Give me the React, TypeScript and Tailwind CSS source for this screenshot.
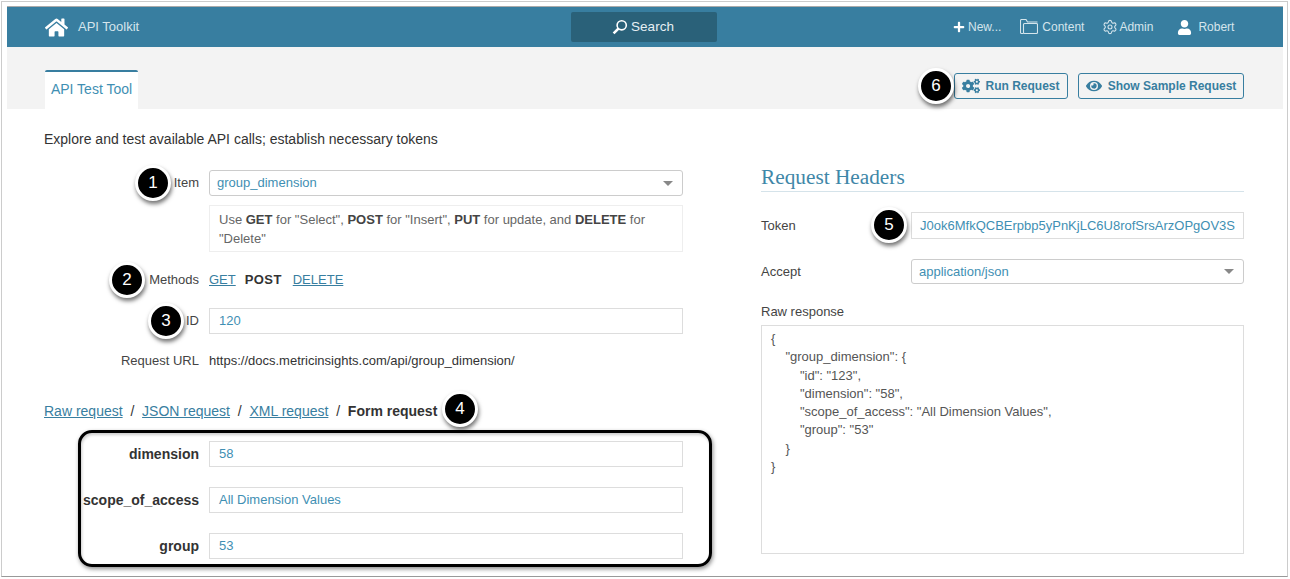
import React from 'react';
import { FaHome, FaPlus, FaCogs, FaEye, FaUser } from 'react-icons/fa';
import { Settings } from 'lucide-react';

const Badge: React.FC<{ n: number; className: string }> = ({ n, className }) => (
  <div className={`absolute w-[30px] h-[30px] rounded-full bg-black border-[3px] border-white text-white text-[17px] flex items-center justify-center shadow-[1px_3px_4px_rgba(0,0,0,0.55)] box-content ${className}`}>
    {n}
  </div>
);

const Field: React.FC<{ value: string; className?: string }> = ({ value, className = '' }) => (
  <div className={`border border-[#ddd] bg-white text-[13px] text-[#3f8fb3] flex items-center px-[9px] ${className}`}>{value}</div>
);

const Select: React.FC<{ value: string; className?: string }> = ({ value, className = '' }) => (
  <div className={`border border-[#ccc] rounded-[3px] bg-white text-[13px] text-[#3f8fb3] flex items-center justify-between pl-[7px] pr-[9px] ${className}`}>
    <span>{value}</span>
    <span className="w-0 h-0 border-l-[5px] border-r-[5px] border-t-[5px] border-l-transparent border-r-transparent border-t-[#888]"></span>
  </div>
);

const Row: React.FC<{ label: string; bold?: boolean; className?: string; children: React.ReactNode }> = ({ label, bold, className = '', children }) => (
  <div className={`flex items-center ${className}`}>
    <div className={`w-[155px] text-right mr-[10px] ${bold ? 'font-bold text-[#333] text-[14px]' : 'text-[13px] text-[#444]'}`}>{label}</div>
    {children}
  </div>
);

const json = `{
    "group_dimension": {
        "id": "123",
        "dimension": "58",
        "scope_of_access": "All Dimension Values",
        "group": "53"
    }
}`;

export default function App() {
  return (
    <div className="relative w-[1290px] h-[579px] bg-white overflow-hidden text-[#333]" style={{ fontFamily: '"Liberation Sans", Arial, sans-serif' }}>
      <div className="mt-[1px] ml-[1px] w-[1287px] h-[576px] border border-[#ccc] border-b-[#999] pt-[4px] pl-[5px] pr-[4px]">
        {/* top bar */}
        <div className="h-[41px] border-t border-[#aaa] bg-[#387ea0] flex items-center text-[#d5e5ec] text-[12px] pl-[38px]">
          <FaHome size={23} className="text-white" />
          <span className="ml-[10px] text-[13px] w-[493px]">API Toolkit</span>
          <div className="w-[146px] h-[30px] rounded-[2px] bg-[#2a6179] flex items-center justify-center text-[13.5px] text-[#e6eff3] gap-[3px] pr-[2px]">
            <svg width="16" height="16" viewBox="0 0 16 16" fill="none" stroke="white" strokeWidth="1.6">
              <circle cx="9.7" cy="6.3" r="4.6" />
              <path d="M6.4 9.6 L1.6 14.4" strokeWidth="2.6" />
            </svg>
            Search
          </div>
          <div className="ml-[236px] flex items-center">
            <FaPlus size={12} className="text-white mr-[3px]" />
            <span>New...</span>
            <svg className="ml-[19px] mr-[4px]" width="18" height="16" viewBox="0 0 18 16" fill="none" stroke="#d5e5ec" strokeWidth="1.1">
              <path d="M3.5 14.5 H1.5 a1 1 0 0 1 -1 -1 V1.5 a1 1 0 0 1 1 -1 H6 L7.5 3 H17.5" />
              <rect x="3.5" y="4.5" width="14" height="10" rx="1" />
            </svg>
            <span>Content</span>
            <Settings size={16} strokeWidth={1.6} className="ml-[18px] mr-[1px]" />
            <span>Admin</span>
            <FaUser size={15} className="ml-[24px] mr-[6px] text-white" />
            <span>Robert</span>
          </div>
        </div>

        {/* tabs */}
        <div className="h-[62px] bg-[#f3f3f3] flex items-end pl-[38px] relative">
          <div className="w-[93px] h-[39px] bg-white border-t-[2px] border-[#387ea0] rounded-t-[2px] text-[14px] text-[#3f8fb3] flex items-center justify-center pb-[2px]">
            API Test Tool
          </div>
          <div className="absolute right-[39px] top-[26px] flex gap-[10px] text-[12px] font-bold text-[#387ea0]">
            <div className="w-[114px] h-[26px] border border-[#387ea0] rounded-[3px] flex items-center justify-center gap-[5px]">
              <FaCogs size={18} />
              Run Request
            </div>
            <div className="w-[166px] h-[26px] border border-[#387ea0] rounded-[3px] flex items-center justify-center gap-[6px]">
              <FaEye size={16} />
              Show Sample Request
            </div>
          </div>
        </div>

        {/* body */}
        <div className="flex pl-[37px]">
          <div className="w-[717px]">
            <div className="text-[14px] mt-[21px] h-[18px] leading-[18px]">Explore and test available API calls; establish necessary tokens</div>
            <div className="w-[639px]">
              <Row label="Item" className="mt-[22px]">
                <Select value="group_dimension" className="w-[474px] h-[26px]" />
              </Row>
              <div className="ml-[165px] mt-[9px] w-[474px] h-[47px] border border-[#eee] text-[13px] leading-[19px] text-[#666] px-[9px] pt-[4px]">
                Use <b className="text-[#444]">GET</b> for "Select", <b className="text-[#444]">POST</b> for "Insert", <b className="text-[#444]">PUT</b> for update, and <b className="text-[#444]">DELETE</b> for "Delete"
              </div>
              <Row label="Methods" className="mt-[19px] h-[18px]">
                <div className="flex text-[13px] text-[#387ea0]">
                  <span className="underline">GET</span>
                  <b className="ml-[9px] text-[#333] tracking-[0.4px]">POST</b>
                  <span className="underline ml-[11px]">DELETE</span>
                </div>
              </Row>
              <Row label="ID" className="mt-[19px]">
                <Field value="120" className="w-[474px] h-[26px]" />
              </Row>
              <Row label="Request URL" className="mt-[18px] h-[18px]">
                <span className="text-[13px] text-[#333]">https://docs.metricinsights.com/api/group_dimension/</span>
              </Row>
              <div className="mt-[32px] h-[18px] flex items-center text-[14px] text-[#387ea0] gap-[7.8px]">
                <span className="underline">Raw request</span>
                <span className="text-[#333]">/</span>
                <span className="underline">JSON request</span>
                <span className="text-[#333]">/</span>
                <span className="underline">XML request</span>
                <span className="text-[#333]">/</span>
                <b className="text-[#333]">Form request</b>
              </div>
              <Row label="dimension" bold className="mt-[21px]">
                <Field value="58" className="w-[474px] h-[26px]" />
              </Row>
              <Row label="scope_of_access" bold className="mt-[20px]">
                <Field value="All Dimension Values" className="w-[474px] h-[26px]" />
              </Row>
              <Row label="group" bold className="mt-[20px]">
                <Field value="53" className="w-[474px] h-[26px]" />
              </Row>
            </div>
          </div>

          <div className="w-[483px]">
            <div className="mt-[56px] h-[27px] border-b border-[#d5e3ea] font-['Liberation_Serif',serif] text-[21.3px] leading-[24px] text-[#3f87a8]">Request Headers</div>
            <div className="flex items-center mt-[20px] text-[13px] text-[#444]">
              <span className="w-[150px] pt-[1px]">Token</span>
              <Field value="J0ok6MfkQCBErpbp5yPnKjLC6U8rofSrsArzOPgOV3S" className="w-[333px] h-[27px] border-[#ccc] pl-[8px]" />
            </div>
            <div className="flex items-center mt-[20px] text-[13px] text-[#444]">
              <span className="w-[150px]">Accept</span>
              <Select value="application/json" className="w-[333px] h-[25px]" />
            </div>
            <div className="mt-[20px] text-[13px] text-[#444] h-[16px] leading-[16px]">Raw response</div>
            <pre className="mt-[5px] w-[483px] h-[229px] border border-[#ddd] text-[13px] leading-[18.3px] text-[#555] px-[9px] pt-[4px]" style={{ fontFamily: '"Liberation Sans", Arial, sans-serif' }}>{json}</pre>
          </div>
        </div>
      </div>

      {/* annotations */}
      <div className="absolute left-[78px] top-[430px] w-[634px] h-[137px] border-[3px] border-black rounded-[14px] shadow-[1px_2px_4px_rgba(0,0,0,0.45),inset_1px_2px_3px_rgba(0,0,0,0.2)]"></div>
      <Badge n={1} className="left-[135px] top-[165px]" />
      <Badge n={2} className="left-[109px] top-[262px]" />
      <Badge n={3} className="left-[148px] top-[303px]" />
      <Badge n={4} className="left-[442px] top-[391px]" />
      <Badge n={5} className="left-[871px] top-[207px]" />
      <Badge n={6} className="left-[918px] top-[68px]" />
    </div>
  );
}
